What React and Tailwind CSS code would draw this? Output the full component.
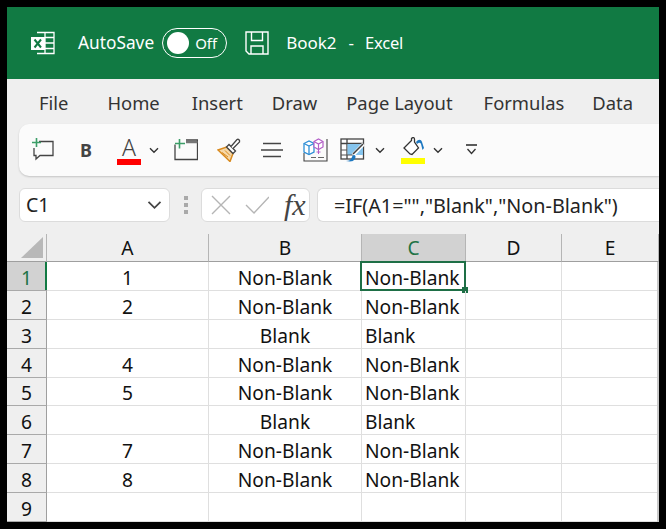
const F = "font-['Noto_Sans',sans-serif]";

const Chev = ({ w = 10, c = "#333", sw = 1.4 }) => (
  <svg width={w} height={w * 0.7} viewBox="0 0 10 7" fill="none" stroke={c} strokeWidth={sw}><path d="M1 1.2 5 5.2 9 1.2" /></svg>
);

const ExcelLogo = () => (
  <svg width="26" height="26" viewBox="0 0 26 26" fill="none">
    <path d="M7 2.5h17v21H7" stroke="#fff" strokeWidth="1.3" />
    <path d="M15 2.5v21M15 7.5h9M15 13h9M15 18.5h9" stroke="#fff" strokeWidth="1.3" />
    <rect x="1" y="7" width="14" height="13" fill="#fff" />
    <path d="M4.5 9.5 11 17.5M11 9.5 4.5 17.5" stroke="#117a43" strokeWidth="2" />
  </svg>
);

const SaveIcon = () => (
  <svg width="26" height="26" viewBox="0 0 26 26" fill="none" stroke="#fff" strokeWidth="1.4">
    <path d="M2 2h22v22H5l-3-3z" />
    <path d="M7.5 2v8.5h11V2M7 24v-8h12v8" />
  </svg>
);

const Comment = () => (
  <svg width="24" height="24" viewBox="0 0 24 24" fill="none">
    <path d="M8 3.5h14v14H9l-4 3.5v-3.5H3V10" stroke="#444" strokeWidth="1.3" />
    <path d="M5.5 0v9M1 4.5h9" stroke="#3c9e68" strokeWidth="1.6" />
  </svg>
);

const NewSheet = () => (
  <svg width="24" height="22" viewBox="0 0 24 22" fill="none">
    <path d="M1 5.5V20.5H23.5V1H12" stroke="#444" strokeWidth="1.3" />
    <path d="M12 3h11.5" stroke="#777" strokeWidth="2.5" />
    <path d="M5.5 0v9.5M1 4.5h10" stroke="#3c9e68" strokeWidth="1.6" />
  </svg>
);

const Painter = () => (
  <svg width="24" height="24" viewBox="0 0 24 24" fill="none">
    <path d="M1 12 9.5 9 16 15.5 13 23.5Z" fill="#f6d8a8" stroke="#d98a1e" strokeWidth="1.5" />
    <path d="M5 14.5 11 19M8 12.5l5 5" stroke="#d98a1e" strokeWidth="1" />
    <path d="M9.5 9 16 15.5 18.5 13 12 6.5Z" fill="#fff" stroke="#444" strokeWidth="1.3" />
    <path d="M14 8.5 20 1.5c1.5-.8 3 .8 2.5 2.5L16 10.5" fill="#fff" stroke="#444" strokeWidth="1.3" />
  </svg>
);

const Align = () => (
  <svg width="22" height="16" viewBox="0 0 22 16" stroke="#444" strokeWidth="1.3"><path d="M2 1.5h18M0 8h22M2 14.5h18" /></svg>
);

const Cube = () => (
  <svg width="25" height="24" viewBox="0 0 25 24" fill="none">
    <path d="M1 15v8h23V1" stroke="#444" strokeWidth="1.1" />
    <path d="M8 19.5h5M15 19.5h6" stroke="#666" strokeWidth="1" />
    <path d="M1 5.5 6 3l5 2.5V14l-5 2.5L1 14Z" fill="#fff" stroke="#2e8fd6" strokeWidth="1.3" />
    <path d="M1 5.5 6 8l5-2.5M6 8v8.5" stroke="#2e8fd6" strokeWidth="1.3" />
    <path d="M11 3.5 15.5 1 20 3.5V9l-4.5 2.5L11 9Z" fill="#fff" stroke="#b45fc8" strokeWidth="1.2" />
    <path d="M11 3.5 15.5 6 20 3.5M15.5 6v5.5" stroke="#b45fc8" strokeWidth="1.2" />
    <path d="M15.5 12v4M13.5 14h4" stroke="#b45fc8" strokeWidth="1" />
  </svg>
);

const TableBrush = () => (
  <svg width="25" height="24" viewBox="0 0 25 24" fill="none">
    <rect x="1" y="1" width="22.5" height="20" fill="#fff" stroke="#444" strokeWidth="1.3" />
    <path d="M1 5.5h22.5M7 1v20" stroke="#444" strokeWidth="1.3" />
    <rect x="7.5" y="6" width="15.5" height="11" fill="#86c5ee" />
    <path d="M1 17h12M1 12h6" stroke="#555" strokeWidth="1" />
    <path d="M13 17 23.5 6" stroke="#fff" strokeWidth="3.5" />
    <path d="M13 16 23 6" stroke="#444" strokeWidth="1.6" />
    <path d="M6 23c3 0 4-1 5-2s1-4 3-4 2 3 0 5-5 1.5-8 1Z" fill="#1d78c1" />
  </svg>
);

const Fill = () => (
  <svg width="21" height="19" viewBox="0 0 21 19" fill="none">
    <path d="M1 11 8.5 3.5V1.5c1.5-1.5 3-1 3 .8V5L15.5 11 9 17.5 7 17Z" fill="#fff" stroke="#333" strokeWidth="1.3" />
    <path d="M13 5c2.5-3 5-3 6 0l2 6-1.5 2-1.5-6c-.8-1.6-2-1.4-4 0Z" fill="#1d78c1" />
  </svg>
);

const Customize = () => (
  <svg width="11" height="12" viewBox="0 0 11 12" fill="none" stroke="#333" strokeWidth="1.3"><path d="M0 1h11" strokeWidth="1.6" /><path d="M1.5 5 5.5 9.5 9.5 5" /></svg>
);

const cols = "grid grid-cols-[40px_162px_153px_104px_96px_1fr]";

const Row = ({ n, a, b, c }) => (
  <div className={`${cols} h-[29px] text-[19.2px] leading-none`}>
    <div className={`flex items-center justify-center pt-[3px] border-r border-r-[#9f9f9f] border-b border-b-[#a9a9a9] ${n === 1 ? "bg-[#d2d2d2] text-[#217346]" : "bg-[#efefef] text-[#111]"} relative`}>
      {n}
      {n === 1 && <div className="absolute right-[-1px] top-0 bottom-0 w-[2px] bg-[#117a43]" />}
    </div>
    <div className="flex items-center justify-center pt-[3px] border-r border-b border-[#dfdfdf] text-[#111]">{a}</div>
    <div className="flex items-center justify-center pt-[3px] border-r border-b border-[#dfdfdf] text-[#111]">{b}</div>
    <div className="flex items-center pl-[3px] pt-[3px] border-r border-b border-[#dfdfdf] text-[#111] relative whitespace-nowrap">
      {c}
      {n === 1 && (
        <>
          <div className="absolute left-[-2px] top-[-1px] right-[-1px] bottom-[-1px] border-2 border-[#1e6f46]" />
          <div className="absolute right-[-3px] bottom-[-3px] w-[6px] h-[6px] bg-[#1e6f46]" />
        </>
      )}
    </div>
    <div className="border-r border-b border-[#dfdfdf]" />
    <div className="border-b border-[#dfdfdf]" />
  </div>
);

const rows = [
  [1, "1", "Non-Blank", "Non-Blank"],
  [2, "2", "Non-Blank", "Non-Blank"],
  [3, "", "Blank", "Blank"],
  [4, "4", "Non-Blank", "Non-Blank"],
  [5, "5", "Non-Blank", "Non-Blank"],
  [6, "", "Blank", "Blank"],
  [7, "7", "Non-Blank", "Non-Blank"],
  [8, "8", "Non-Blank", "Non-Blank"],
  [9, "", "", ""],
];

const Hdr = ({ t, sel }) => (
  <div className={`flex items-center justify-center pt-[1px] text-[19.2px] leading-none border-r border-[#b5b5b5] border-b border-b-[#9f9f9f] ${sel ? "bg-[#d2d2d2] text-[#217346]" : "text-[#111]"}`}>{t}</div>
);

export default function App() {
  return (
    <div className={`w-[666px] h-[529px] bg-black p-[7px] overflow-hidden ${F}`}>
      <div className="flex flex-col w-[652px] h-[515px] bg-[#efefef] overflow-hidden">
        <div className="h-[72px] shrink-0 bg-[#117a43] flex items-center pl-[23px] text-white">
          <ExcelLogo />
          <span className="ml-[22px] text-[17.3px]">AutoSave</span>
          <div className="ml-[8px] w-[65px] h-[30px] rounded-full border border-white flex items-center pl-[4px]">
            <div className="w-[22px] h-[22px] rounded-full bg-white" />
            <span className="ml-[6px] text-[15px]">Off</span>
          </div>
          <div className="ml-[17px]"><SaveIcon /></div>
          <span className="ml-[16px] text-[17px]">Book2</span>
          <span className="ml-[12px] text-[17px]">-</span>
          <span className="ml-[11px] text-[16.5px] tracking-[-0.2px]">Excel</span>
        </div>

        <div className="h-[45px] shrink-0 flex items-center text-[18.4px] text-[#333] pl-[32px] pt-[3px]">
          <span>File</span>
          <span className="ml-[39px]">Home</span>
          <span className="ml-[32px]">Insert</span>
          <span className="ml-[29px]">Draw</span>
          <span className="ml-[29px]">Page Layout</span>
          <span className="ml-[31px]">Formulas</span>
          <span className="ml-[28px]">Data</span>
        </div>

        <div className="h-[52px] shrink-0 ml-[12px] bg-[#fbfbfb] rounded-l-[10px] shadow-[0_1px_2px_rgba(0,0,0,0.18)] flex items-center pl-[12px]">
          <Comment />
          <span className="ml-[25px] text-[18px] font-bold text-[#444] w-[12px]">B</span>
          <div className="ml-[25px] flex flex-col items-center w-[24px] gap-[1px]">
            <span className="text-[23px] leading-[22px] font-light text-[#444]">A</span>
            <div className="w-[24px] h-[6px] bg-[#ff0000]" />
          </div>
          <div className="ml-[8px]"><Chev /></div>
          <div className="ml-[15px]"><NewSheet /></div>
          <div className="ml-[19px]"><Painter /></div>
          <div className="ml-[20px]"><Align /></div>
          <div className="ml-[20px]"><Cube /></div>
          <div className="ml-[12px]"><TableBrush /></div>
          <div className="ml-[10px]"><Chev /></div>
          <div className="ml-[16px] flex flex-col items-center gap-[2px] w-[24px]">
            <Fill />
            <div className="w-[24px] h-[6px] bg-[#ffff00]" />
          </div>
          <div className="ml-[8px]"><Chev /></div>
          <div className="ml-[23px]"><Customize /></div>
        </div>

        <div className="h-[34px] mt-[12px] shrink-0 flex items-stretch pl-[12px]">
          <div className="w-[151px] bg-white border border-[#dcdcdc] rounded-[6px] flex items-center justify-between pl-[6px] pr-[7px] text-[19.5px] text-[#222]">
            <span>C1</span>
            <Chev w={15} c="#444" sw={1.2} />
          </div>
          <div className="w-[31px] flex flex-col items-center justify-center gap-[3px]">
            <div className="w-[4px] h-[4px] bg-[#a9a9a9]" />
            <div className="w-[4px] h-[4px] bg-[#a9a9a9]" />
            <div className="w-[4px] h-[4px] bg-[#a9a9a9]" />
          </div>
          <div className="w-[109px] bg-white border border-[#dcdcdc] rounded-[6px] flex items-center pl-[9px]">
            <svg width="20" height="20" viewBox="0 0 20 20" stroke="#b5b5b5" strokeWidth="1.4" fill="none"><path d="M1 1 19 19M19 1 1 19" /></svg>
            <svg className="ml-[14px]" width="24" height="18" viewBox="0 0 24 18" stroke="#b5b5b5" strokeWidth="1.4" fill="none"><path d="M1 9 9 17 24 1" /></svg>
            <span className="ml-[15px] text-[30px] leading-none italic text-[#444] font-['Liberation_Serif',serif]">fx</span>
          </div>
          <div className="ml-[7px] flex-1 bg-white border border-[#dcdcdc] border-r-0 rounded-l-[6px] flex items-center pl-[16px] pt-[1px] text-[19.8px] text-[#222] whitespace-nowrap">
            =IF(A1="","Blank","Non-Blank")
          </div>
        </div>

        <div className={`mt-[12px] h-[28px] shrink-0 ${cols}`}>
          <div className="border-r border-[#b5b5b5] border-b border-b-[#9f9f9f] flex items-end justify-end pr-[3px] pb-[3px]">
            <svg width="22" height="21" viewBox="0 0 22 21"><path d="M22 0V21H0Z" fill="#b8b8b8" /></svg>
          </div>
          <Hdr t="A" />
          <Hdr t="B" />
          <Hdr t="C" sel />
          <Hdr t="D" />
          <Hdr t="E" />
        </div>

        <div className="flex-1 bg-white flex flex-col min-h-0 border-r-2 border-r-[#c9c9c9]">
          {rows.map(([n, a, b, c]) => <Row key={n} n={n} a={a} b={b} c={c} />)}
        </div>
      </div>
    </div>
  );
}
